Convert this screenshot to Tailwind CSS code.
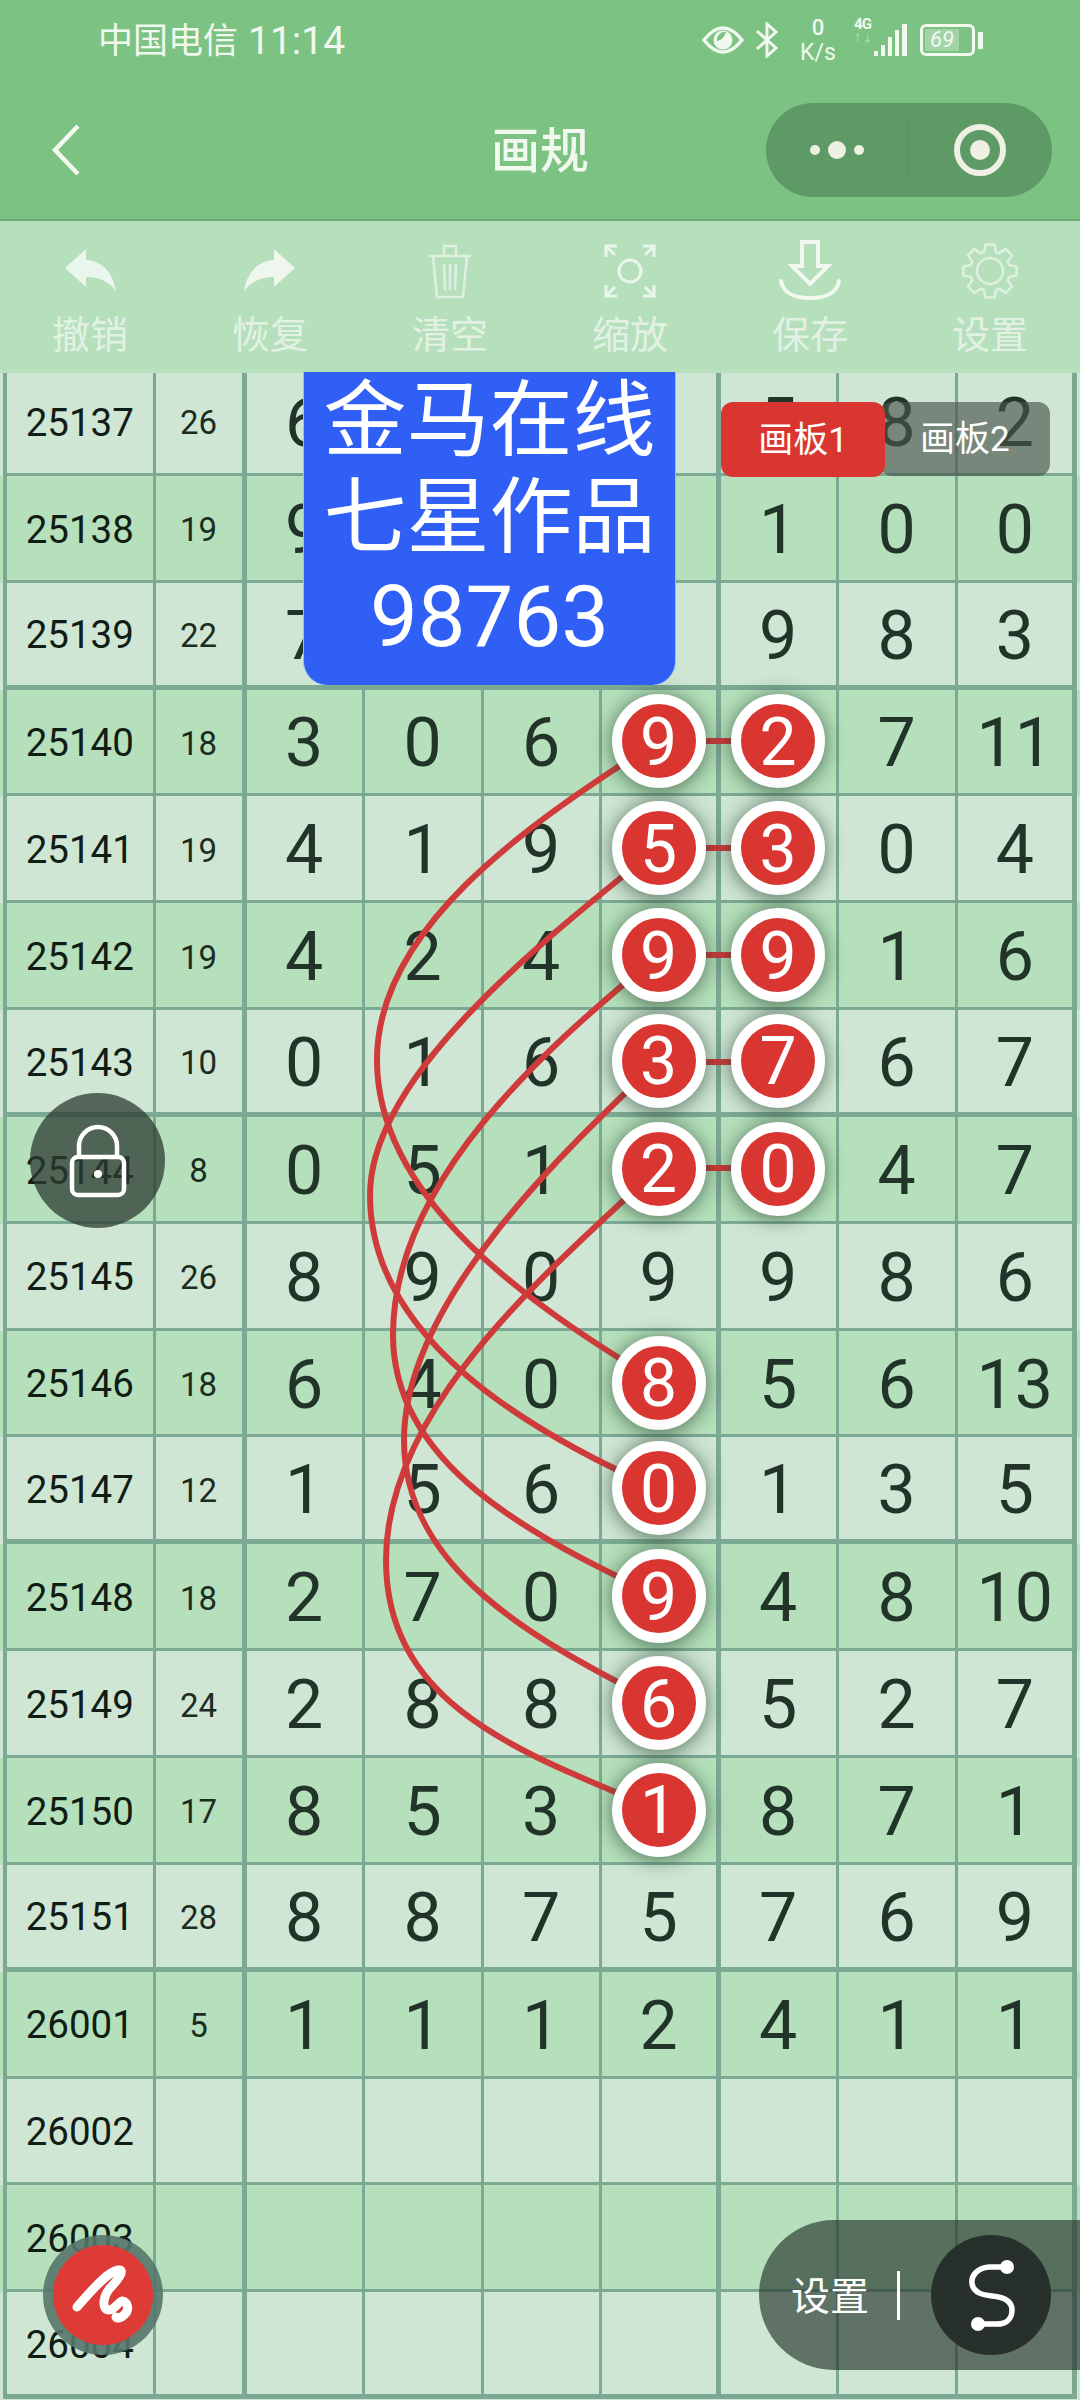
<!DOCTYPE html>
<html lang="en">
<head>
    <meta charset="UTF-8" />
    <meta name="viewport" content="width=device-width, initial-scale=1.0"/>
    <title>画规</title>
    <script src="https://cdn.jsdelivr.net/npm/@tailwindcss/browser@4"></script>
</head>
<body class="bg-[#cfe6d4]">
<div class="relative w-[1080px] h-[2400px] overflow-hidden font-['Roboto','Noto_Sans_CJK_SC',sans-serif]">

    <!-- header -->
    <div class="h-[221px] bg-[#7cc283] border-b-2 border-[#6dab74] text-[#f1f8ee]">
        <div class="h-[80px] flex items-center justify-between pl-[98px] pr-[97px]">
            <div class="pt-[3px] flex items-center gap-[10px] leading-none"><span class="text-[35px]">中国电信</span><span class="text-[39px]">11:14</span></div>
            <div class="flex items-center">
                <svg width="42" height="28" viewBox="0 0 42 28" fill="none"><path d="M2 14C9 5 15 2 21 2s12 3 19 12c-7 9-13 12-19 12S9 23 2 14z" stroke="#f1f8ee" stroke-width="3.5"/><circle cx="21" cy="14" r="9.5" fill="#f1f8ee"/><path d="M24 6a8 8 0 0 0-9 9c3-1 6-1 9-9z" fill="#7cc283"/></svg>
                <svg class="ml-[11px]" width="24" height="36" viewBox="0 0 24 36" fill="none" stroke="#f1f8ee" stroke-width="3"><path d="M2 9l19 17-9 8V2l9 8L2 27"/></svg>
                <div class="ml-[20px] w-[38px] flex flex-col items-center"><span class="text-[22px] leading-[25px] font-medium">0</span><span class="text-[23px] leading-[25px]">K/s</span></div>
                <div class="ml-[16px] w-[19px] flex flex-col items-center self-start pt-[2px]"><span class="text-[15px] leading-[15px] font-bold tracking-[-1px]">4G</span><span class="text-[10px] leading-[14px] opacity-50">↑↓</span></div>
                <div class="flex items-end gap-[3px] h-[32px] ml-[2px]">
                    <span class="w-[4px] h-[5px] bg-[#f1f8ee]"></span>
                    <span class="w-[4px] h-[11px] bg-[#f1f8ee]"></span>
                    <span class="w-[4px] h-[19px] bg-[#f1f8ee]"></span>
                    <span class="w-[4px] h-[26px] bg-[#f1f8ee]"></span>
                    <span class="w-[5px] h-[32px] bg-[#f1f8ee]"></span>
                </div>
                <div class="ml-[13px] flex items-center">
                    <div class="w-[55px] h-[32px] rounded-[6px] border-[3px] border-[#f1f8ee] p-[2px]"><div class="w-[34px] h-full rounded-[2px] bg-white/30 flex items-center justify-center text-[22px] italic leading-none">69</div></div>
                    <span class="w-[5px] h-[17px] ml-[3px] bg-[#f1f8ee]"></span>
                </div>
            </div>
        </div>
        <div class="h-[139px] grid grid-cols-3 items-center">
            <svg class="ml-[50px]" width="32" height="54" viewBox="0 0 32 54" fill="none" stroke="#f4f9f0" stroke-width="4.5"><path d="M28 3L5 27l23 24"/></svg>
            <div class="text-center text-[49px] leading-[60px] pt-[4px] font-medium text-[#f1f8ee]">画规</div>
            <div class="justify-self-end mr-[28px] w-[286px] h-[94px] rounded-full bg-[#5e9a66] flex items-center">
                <div class="w-[142px] h-[60px] border-r border-[#589060] flex items-center justify-center gap-[8px]">
                    <span class="w-[10px] h-[10px] rounded-full bg-[#edf0e2]"></span>
                    <span class="w-[18px] h-[18px] rounded-full bg-[#edf0e2]"></span>
                    <span class="w-[10px] h-[10px] rounded-full bg-[#edf0e2]"></span>
                </div>
                <div class="flex-1 flex items-center justify-center">
                    <div class="w-[52px] h-[52px] rounded-full border-[6px] border-[#edf0e2] flex items-center justify-center"><span class="w-[20px] h-[20px] rounded-full bg-[#edf0e2]"></span></div>
                </div>
            </div>
        </div>
    </div>

    <!-- toolbar -->
    <div class="h-[152px] bg-[#b5e0bb] flex pt-[18px] text-[#e2f1e4] text-[38px] leading-[44px]">
        <div class="flex-1 flex flex-col items-center">
            <svg width="60" height="62" viewBox="0 0 60 62"><path d="M5 29L26 10v11c17 1 27 13 30 31-8-10-17-14-30-14v10z" fill="#e9f6ee"/></svg>
            <span class="mt-[12px]">撤销</span>
        </div>
        <div class="flex-1 flex flex-col items-center">
            <svg width="60" height="62" viewBox="0 0 60 62"><path d="M55 29L34 10v11C17 22 7 34 4 52c8-10 17-14 30-14v10z" fill="#eef6ee"/></svg>
            <span class="mt-[12px]">恢复</span>
        </div>
        <div class="flex-1 flex flex-col items-center">
            <svg width="60" height="62" viewBox="0 0 60 62" fill="none" stroke="#dff0e2" stroke-width="2.5"><path d="M9 17h42M24 16V7h12v9M13 17l4 41h26l4-41M24 25l1 26M30 25v26M36 25l-1 26"/></svg>
            <span class="mt-[12px]">清空</span>
        </div>
        <div class="flex-1 flex flex-col items-center">
            <svg width="60" height="62" viewBox="0 0 60 62" fill="none" stroke="#eaf5ec" stroke-width="3"><circle cx="30" cy="32" r="11"/><path d="M17 7H6v11M6 7l9 9M43 7h11v11M54 7l-9 9M17 57H6V46M6 57l9-9M43 57h11V46M54 57l-9-9"/></svg>
            <span class="mt-[12px]">缩放</span>
        </div>
        <div class="flex-1 flex flex-col items-center">
            <svg width="64" height="62" viewBox="0 0 64 62" fill="none" stroke="#f1f8f0" stroke-width="4"><path d="M24 3h16v24h10L32 45 14 27h10z"/><path d="M3 42c2 12 14 17 29 17s27-5 29-17" stroke-linecap="round"/></svg>
            <span class="mt-[12px]">保存</span>
        </div>
        <div class="flex-1 flex flex-col items-center">
            <svg width="60" height="62" viewBox="0 0 60 62" fill="none" stroke="#dff0e2" stroke-width="2.5" stroke-linejoin="round"><path id="gear"/><circle cx="30" cy="32" r="13"/></svg>
            <span class="mt-[12px]">设置</span>
        </div>
    </div>

    <!-- table -->
    <div class="h-[2027px] overflow-hidden">
        <div id="rows" class="-mt-[4px]"></div>
    </div>

    <!-- curves between the balls -->
    <svg class="absolute top-0 left-0 z-10 pointer-events-none" width="1080" height="2400" viewBox="0 0 1080 2400" fill="none" stroke="#cf3b3b" stroke-width="6">
        <path d="M658 741C520 829 377 930 377 1060C377 1200 530 1305 658 1382"/>
        <path d="M658 848C530 950 370 1080 370 1195C370 1340 530 1432 658 1489"/>
        <path d="M658 955C570 1030 393 1170 393 1335C393 1465 530 1535 658 1596"/>
        <path d="M658 1062C570 1145 404 1300 404 1440C404 1570 535 1640 658 1703"/>
        <path d="M658 1168C565 1258 386 1400 386 1560C386 1710 530 1755 658 1810"/>
        <path d="M658 741H777M658 848H777M658 955H777M658 1062H777M658 1168H777"/>
    </svg>

    <!-- overlays -->
    <div class="absolute z-30 top-[372px] left-[303px] w-[373px] h-[313px] rounded-b-[24px] bg-[#2f5ff5] border-x border-[#8fc4f0] text-white text-center text-[83px] leading-[97px]">
        <div>金马在线</div>
        <div>七星作品</div>
        <div class="text-[85px] mt-[3px]">98763</div>
    </div>

    <div class="absolute z-30 top-[402px] left-[880px] w-[170px] h-[74px] rounded-[12px] bg-[#48544b]/65 text-white text-[35px] leading-[76px] pl-[40px]">画板2</div>
    <div class="absolute z-30 top-[402px] left-[721px] w-[164px] h-[75px] rounded-[12px] bg-[#d93632] text-white text-[35px] leading-[77px] text-center">画板1</div>

    <div class="absolute z-30 top-[1093px] left-[30px] w-[135px] h-[135px] rounded-full bg-[#2e3b33]/75 flex items-center justify-center">
        <svg width="60" height="74" viewBox="0 0 60 74" fill="none" stroke="#fff" stroke-width="4.5"><path d="M11 33V22a19 19 0 0 1 38 0v11"/><rect x="4" y="33" width="52" height="38" rx="6"/><circle cx="30" cy="50" r="4" fill="#fff" stroke="none"/></svg>
    </div>

    <div class="absolute z-30 top-[2235px] left-[43px] w-[120px] h-[120px] rounded-full bg-[#55766a]/90 flex items-center justify-center">
        <div class="w-[100px] h-[100px] rounded-full bg-[#de3a36] flex items-center justify-center">
            <svg width="70" height="70" viewBox="0 0 70 70" fill="none" stroke="#fff" stroke-width="9" stroke-linecap="round" stroke-linejoin="round"><path d="M9 47C20 35 38 12 50 10C58 9 50 20 42 28C34 38 34 50 41 50C47 50 50 42 54 41C60 42 62 50 56 55C53 58 49 59 48 57"/></svg>
        </div>
    </div>

    <div class="absolute z-30 top-[2220px] left-[759px] w-[321px] h-[150px] rounded-l-[75px] bg-[#25332b]/65 flex items-center pl-[32px]">
        <span class="text-white text-[39px] w-[78px] pt-[4px]">设置</span>
        <span class="ml-[28px] w-[3px] h-[49px] bg-white"></span>
        <div class="ml-[31px] w-[120px] h-[120px] rounded-full bg-[#28302c] flex items-center justify-center">
            <svg width="64" height="80" viewBox="0 0 64 80" fill="none" stroke="#fff" stroke-width="5.5"><path d="M48 12H30C18 13 12 21 13 28C14 38 24 40 33 41C44 42 53 46 53 55C53 65 46 69 38 69H19"/><circle cx="48" cy="12" r="7" fill="#fff" stroke="none"/><circle cx="19" cy="69" r="7" fill="#fff" stroke="none"/></svg>
        </div>
    </div>
</div>

<script>
    // -B marks a cell that holds a red ball
    const data = [
        ["25137", "26", "6", "", "", "", "5", "8", "2"],
        ["25138", "19", "9", "", "", "", "1", "0", "0"],
        ["25139", "22", "7", "", "", "", "9", "8", "3"],
        ["25140", "18", "3", "0", "6", "9-B", "2-B", "7", "11"],
        ["25141", "19", "4", "1", "9", "5-B", "3-B", "0", "4"],
        ["25142", "19", "4", "2", "4", "9-B", "9-B", "1", "6"],
        ["25143", "10", "0", "1", "6", "3-B", "7-B", "6", "7"],
        ["25144", "8", "0", "5", "1", "2-B", "0-B", "4", "7"],
        ["25145", "26", "8", "9", "0", "9", "9", "8", "6"],
        ["25146", "18", "6", "4", "0", "8-B", "5", "6", "13"],
        ["25147", "12", "1", "5", "6", "0-B", "1", "3", "5"],
        ["25148", "18", "2", "7", "0", "9-B", "4", "8", "10"],
        ["25149", "24", "2", "8", "8", "6-B", "5", "2", "7"],
        ["25150", "17", "8", "5", "3", "1-B", "8", "7", "1"],
        ["25151", "28", "8", "8", "7", "5", "7", "6", "9"],
        ["26001", "5", "1", "1", "1", "2", "4", "1", "1"],
        ["26002", "", "", "", "", "", "", "", ""],
        ["26003", "", "", "", "", "", "", "", ""],
        ["26004", "", "", "", "", "", "", "", ""]
    ];

    const colClass = [
        "border-l-[4px] border-r-[3px] text-[38.5px] text-[#101c14]",
        "border-r-[5px] text-[33px] text-[#1c2c22]",
        "border-r-[3px] text-[68px] text-[#22332a]",
        "border-r-[3px] text-[68px] text-[#22332a]",
        "border-r-[3px] text-[68px] text-[#22332a]",
        "border-r-[5px] text-[68px] text-[#22332a]",
        "border-r-[3px] text-[68px] text-[#22332a]",
        "border-r-[3px] text-[68px] text-[#22332a]",
        "border-r-[5px] text-[68px] text-[#22332a]"
    ];

    document.getElementById('rows').innerHTML = data.map((row, r) => {
        const bg = r % 2 === 0 ? "bg-[#cfe6d4]" : "bg-[#b5e0bb]";
        const line = (r + 1) % 4 === 3 ? "border-b-[5px]" : "border-b-[3px]";
        const cells = row.map((val, c) => {
            const inner = val.endsWith("-B")
                ? `<span class="relative z-20 w-[94px] h-[94px] shrink-0 rounded-full bg-[#d93632] border-[10px] border-white text-white text-[66px] pt-[3px] flex items-center justify-center shadow-[0_2px_20px_rgba(30,60,40,0.7)]">${val[0]}</span>`
                : `<span class="pt-[4px]">${val}</span>`;
            return `<div class="${colClass[c]} ${line} border-[#7ba994] flex items-center justify-center leading-none">${inner}</div>`;
        }).join('');
        return `<div class="${bg} h-[106.85px] pl-[3px] grid grid-cols-[152.5px_91px_118px_119px_118px_119px_118px_119px_119.5px]">${cells}</div>`;
    }).join('');

    // eight tooth gear for the settings icon
    let d = "";
    for (let i = 0; i < 8; i++) {
        const a = i * Math.PI / 4;
        [[-0.3, 20], [-0.17, 27], [0.17, 27], [0.3, 20]].forEach(([da, rad]) => {
            d += (d ? "L" : "M") + (30 + rad * Math.cos(a + da)).toFixed(1) + " " + (32 + rad * Math.sin(a + da)).toFixed(1);
        });
    }
    document.getElementById('gear').setAttribute('d', d + "Z");
</script>
</body>
</html>
